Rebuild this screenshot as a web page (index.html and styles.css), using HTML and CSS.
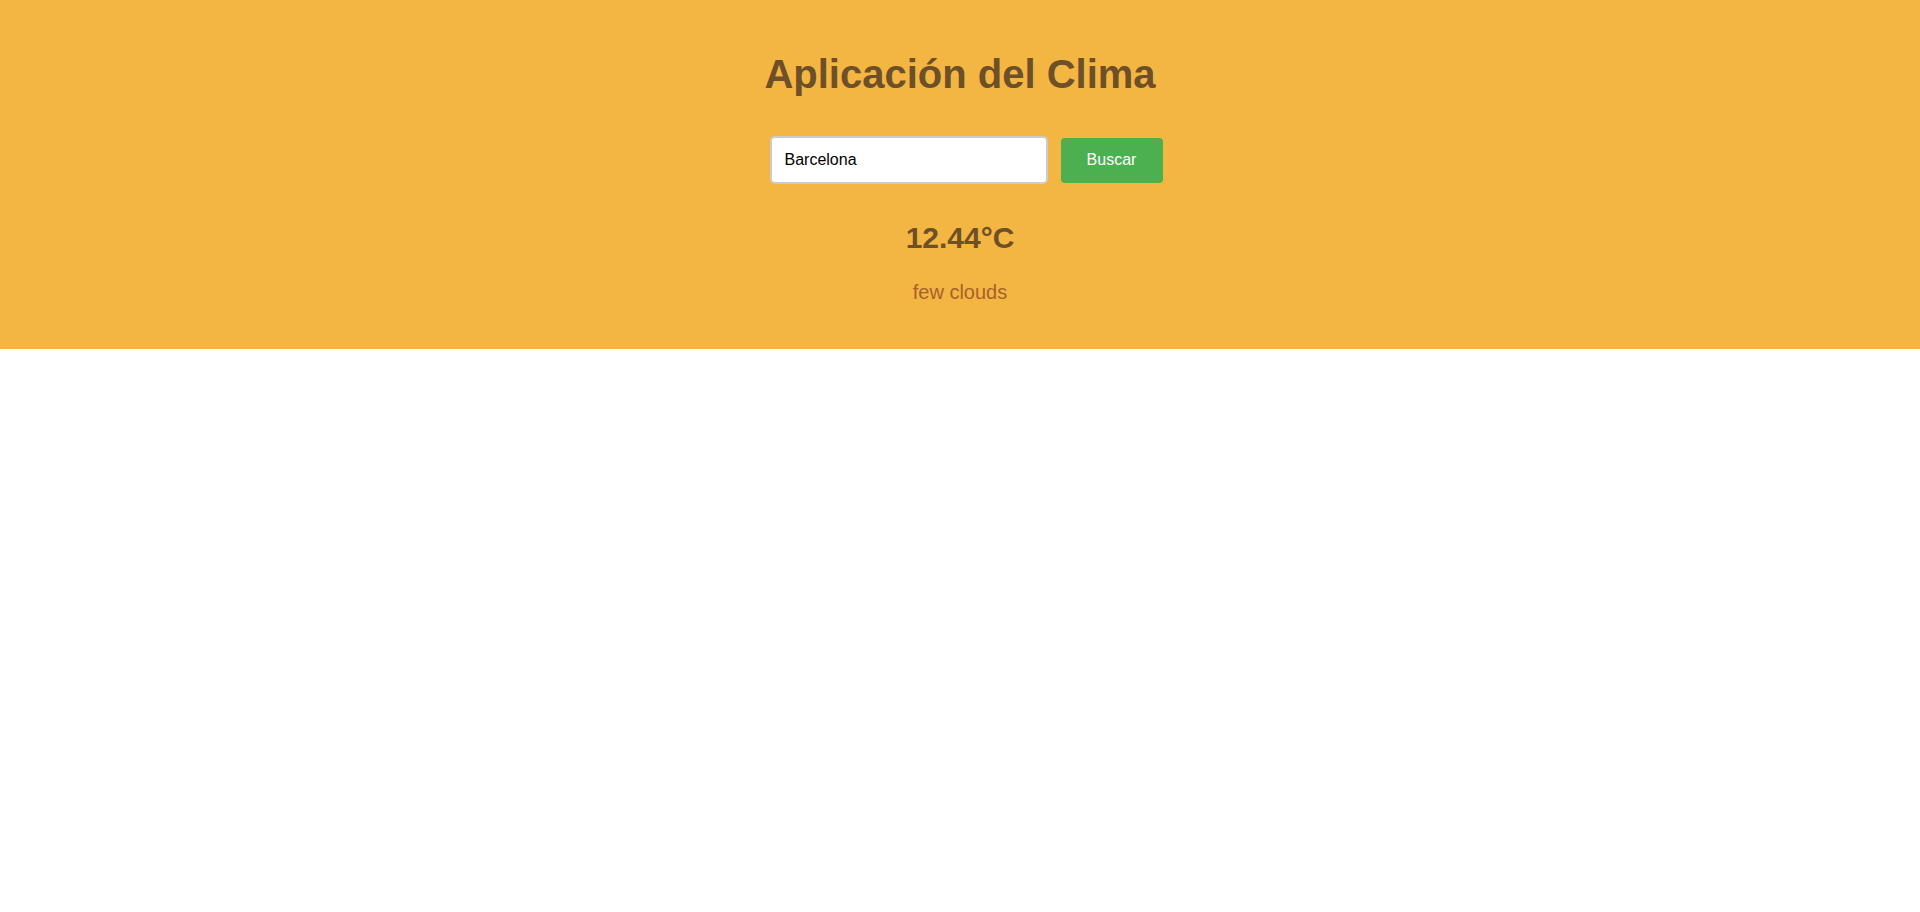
FILE: index.html
```html
<!DOCTYPE html>
<html lang="es">
<head>
<meta charset="utf-8">
<title>Aplicación del Clima</title>
<link rel="stylesheet" href="styles.css">
</head>
<body>
<header class="weather">
  <h1 class="title">Aplicación del Clima</h1>
  <form class="search" onsubmit="return false">
    <input class="search-input" type="text" value="Barcelona">
    <button class="search-btn" type="submit">Buscar</button>
  </form>
  <div class="temp">12.44°C</div>
  <div class="desc">few clouds</div>
</header>
</body>
</html>
```

FILE: styles.css
```css
html, body {
  margin: 0;
  padding: 0;
  background: #ffffff;
  font-family: "Liberation Sans", Arial, sans-serif;
}

.weather {
  background: #f4b642;
  padding: 51px 0 45px;
  display: flex;
  flex-direction: column;
  align-items: center;
}

.title {
  margin: 0 0 39px;
  font-size: 40px;
  line-height: 46px;
  font-weight: bold;
  color: #6d4f28;
}

.search {
  display: flex;
  align-items: center;
  gap: 13px;
  padding-left: 12px;
  height: 48px;
}

.search-input {
  box-sizing: border-box;
  width: 278px;
  height: 48px;
  padding: 0 13px;
  border: 2px solid #cccccc;
  border-radius: 5px;
  background: #ffffff;
  font-family: "Liberation Sans", Arial, sans-serif;
  font-size: 16px;
  color: #000000;
  outline: none;
}

.search-btn {
  box-sizing: border-box;
  width: 102px;
  height: 45px;
  border: none;
  border-radius: 4px;
  background: #4caf50;
  color: #ffffff;
  font-family: "Liberation Sans", Arial, sans-serif;
  font-size: 16px;
  cursor: pointer;
}

.temp {
  margin-top: 37px;
  font-size: 30px;
  line-height: 34px;
  font-weight: bold;
  color: #6d4f28;
}

.desc {
  margin-top: 26px;
  font-size: 20px;
  line-height: 23px;
  color: #a5622b;
}
```
